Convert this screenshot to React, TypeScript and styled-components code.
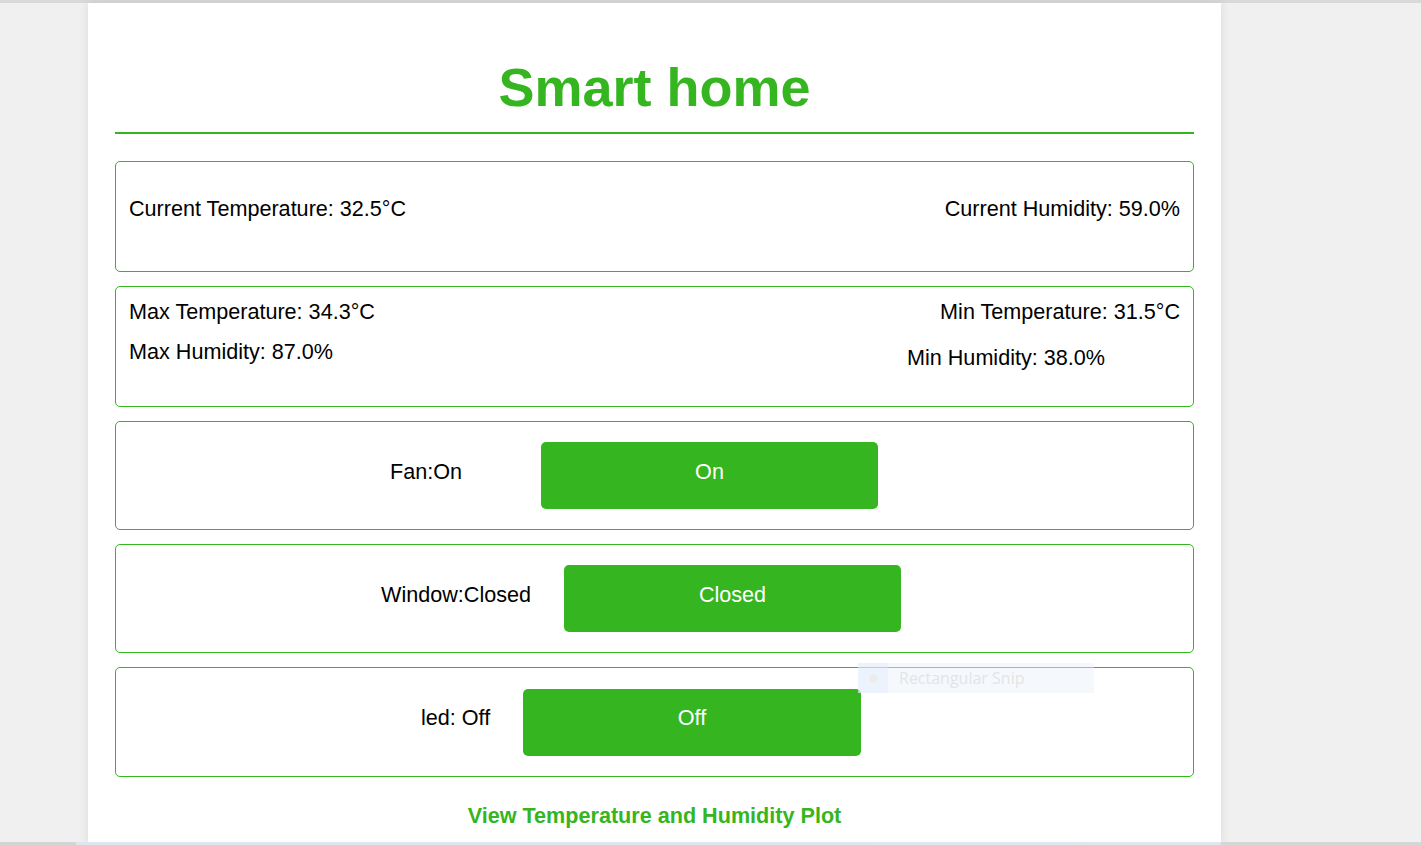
import React from "react";
import styled, { createGlobalStyle } from "styled-components";

const GREEN = "#35b520";

const Global = createGlobalStyle`
  html, body {
    margin: 0;
    padding: 0;
    background: #f0f0f0;
    font-family: "Liberation Sans", Arial, sans-serif;
    color: #000;
    overflow: hidden;
  }
`;

const TopBar = styled.div`
  height: 3px;
  background: #d9d9d9;
`;

const Page = styled.div`
  display: flex;
  justify-content: flex-start;
  padding-left: 88px;
  height: 842px;
`;

const Container = styled.main`
  width: 1133px;
  box-sizing: border-box;
  background: #fff;
  padding: 53px 27px 0;
  box-shadow: 0 0 10px rgba(0, 0, 0, 0.09);
  display: flex;
  flex-direction: column;
`;

const Title = styled.h1`
  margin: 0;
  text-align: center;
  color: ${GREEN};
  font-size: 54px;
  line-height: 62px;
  font-weight: 700;
  letter-spacing: 0;
`;

const Rule = styled.hr`
  margin: 14px 0 27px;
  border: none;
  height: 2px;
  background: ${GREEN};
`;

const Cards = styled.div`
  display: flex;
  flex-direction: column;
  gap: 14px;
`;

const Card = styled.section<{ $h: number }>`
  box-sizing: border-box;
  height: ${(p) => p.$h}px;
  border: 1px solid ${GREEN};
  border-radius: 5px;
  font-size: 21.6px;
  line-height: 24px;
`;

const SplitCard = styled(Card)<{ $top: number }>`
  display: flex;
  justify-content: space-between;
  align-items: flex-start;
  padding: ${(p) => p.$top}px 13px 0 13px;
`;

const Column = styled.div<{ $align: "left" | "right" }>`
  display: flex;
  flex-direction: column;
  align-items: ${(p) => (p.$align === "left" ? "flex-start" : "flex-end")};
`;

const Stat = styled.span<{ $mt?: number; $mr?: number }>`
  display: block;
  margin-top: ${(p) => p.$mt ?? 0}px;
  margin-right: ${(p) => p.$mr ?? 0}px;
`;

const ControlCard = styled(Card)<{ $indent: number }>`
  display: flex;
  align-items: center;
  padding-left: ${(p) => p.$indent}px;
`;

const ControlLabel = styled.span<{ $w: number }>`
  width: ${(p) => p.$w}px;
  padding-bottom: 8px;
`;

const ToggleButton = styled.button<{ $w: number }>`
  width: ${(p) => p.$w}px;
  height: 67px;
  border: none;
  border-radius: 5px;
  background: ${GREEN};
  color: #fff;
  font-family: "Liberation Sans", Arial, sans-serif;
  font-size: 21.6px;
  cursor: pointer;
  padding: 0 0 8px;
`;

const PlotLink = styled.a`
  display: block;
  margin-top: 27px;
  text-align: center;
  color: ${GREEN};
  font-weight: 700;
  font-size: 21.6px;
  line-height: 24px;
  text-decoration: none;
`;

const SnipTip = styled.div`
  position: absolute;
  left: 858px;
  top: 663px;
  width: 236px;
  height: 30px;
  display: flex;
  align-items: center;
  background: rgba(232, 242, 253, 0.45);
  font-family: "Open Sans", "Noto Sans", sans-serif;
  font-size: 16px;
  color: #e4e4e4;
`;

const SnipIcon = styled.span`
  width: 30px;
  height: 30px;
  display: flex;
  align-items: center;
  justify-content: center;
  background: rgba(225, 236, 250, 0.4);
  &::before {
    content: "";
    width: 9px;
    height: 9px;
    border-radius: 50%;
    background: #ececec;
  }
`;

const SnipText = styled.span`
  margin-left: 11px;
`;

const BottomStrip = styled.div`
  position: fixed;
  left: 0;
  right: 0;
  bottom: 0;
  height: 3px;
  background: linear-gradient(
    to right,
    #d4d4d4 0,
    #d4d4d4 76px,
    #dfe5ee 76px,
    #e0e6ee 1221px,
    #d6d6d6 1221px
  );
`;

export default function App() {
  return (
    <>
      <Global />
      <TopBar />
      <Page>
        <Container>
          <Title>Smart home</Title>
          <Rule />
          <Cards>
            <SplitCard $h={111} $top={35}>
              <Stat>Current Temperature: 32.5°C</Stat>
              <Stat>Current Humidity: 59.0%</Stat>
            </SplitCard>
            <SplitCard $h={121} $top={13}>
              <Column $align="left">
                <Stat>Max Temperature: 34.3°C</Stat>
                <Stat $mt={16}>Max Humidity: 87.0%</Stat>
              </Column>
              <Column $align="right">
                <Stat>Min Temperature: 31.5°C</Stat>
                <Stat $mt={22} $mr={75}>Min Humidity: 38.0%</Stat>
              </Column>
            </SplitCard>
            <ControlCard $h={109} $indent={274}>
              <ControlLabel $w={151}>Fan:On</ControlLabel>
              <ToggleButton $w={337}>On</ToggleButton>
            </ControlCard>
            <ControlCard $h={109} $indent={265}>
              <ControlLabel $w={183}>Window:Closed</ControlLabel>
              <ToggleButton $w={337}>Closed</ToggleButton>
            </ControlCard>
            <ControlCard $h={110} $indent={305}>
              <ControlLabel $w={102}>led: Off</ControlLabel>
              <ToggleButton $w={338}>Off</ToggleButton>
            </ControlCard>
          </Cards>
          <PlotLink href="#">View Temperature and Humidity Plot</PlotLink>
        </Container>
      </Page>
      <SnipTip>
        <SnipIcon />
        <SnipText>Rectangular Snip</SnipText>
      </SnipTip>
      <BottomStrip />
    </>
  );
}
